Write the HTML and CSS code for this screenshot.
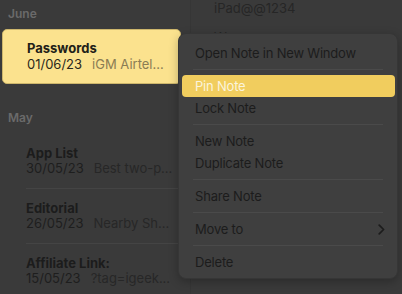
FILE: index.html
```html
<!DOCTYPE html>
<html>
<head>
<meta charset="utf-8">
<link rel="stylesheet" href="styles.css">
</head>
<body>
<div class="app">
  <aside class="sidebar">
    <div class="section-title">June</div>
    <div class="note-selected">
      <div class="note-title">Passwords</div>
      <div class="note-meta"><span class="note-date">01/06/23</span><span class="note-snippet">iGM Airtel...</span></div>
    </div>
    <div class="section-title section-may">May</div>
    <div class="note note-first">
      <div class="note-title">App List</div>
      <div class="note-meta"><span class="note-date">30/05/23</span><span class="note-snippet">Best two-p...</span></div>
    </div>
    <div class="note">
      <div class="note-title">Editorial</div>
      <div class="note-meta"><span class="note-date">26/05/23</span><span class="note-snippet">Nearby Sh...</span></div>
    </div>
    <div class="note note-last">
      <div class="note-title">Affiliate Link:</div>
      <div class="note-meta"><span class="note-date">15/05/23</span><span class="note-snippet">?tag=igeek...</span></div>
    </div>
  </aside>
  <main class="detail">
    <div class="detail-line">iPad@@1234</div>
    <div class="detail-line">Wooooo</div>
  </main>
</div>
<div class="menu">
  <div class="menu-item">Open Note in New Window</div>
  <div class="menu-sep"></div>
  <div class="menu-item menu-item-active">Pin Note</div>
  <div class="menu-item">Lock Note</div>
  <div class="menu-sep"></div>
  <div class="menu-item">New Note</div>
  <div class="menu-item">Duplicate Note</div>
  <div class="menu-sep"></div>
  <div class="menu-item">Share Note</div>
  <div class="menu-sep"></div>
  <div class="menu-item menu-item-sub">Move to
    <svg class="chevron" width="7" height="11" viewBox="0 0 7 11"><path d="M1.2 1.2 L5.6 5.5 L1.2 9.8" fill="none" stroke="#1c1c1c" stroke-width="1.7" stroke-linecap="round" stroke-linejoin="round"/></svg>
  </div>
  <div class="menu-sep"></div>
  <div class="menu-item">Delete</div>
</div>
</body>
</html>
```
FILE: styles.css
```css
html, body {
  margin: 0;
  padding: 0;
}
body {
  width: 402px;
  height: 294px;
  overflow: hidden;
  background: #3a3a3a;
  font-family: Inter, "Noto Sans", sans-serif;
  position: relative;
}
.app {
  display: grid;
  grid-template-columns: 191px 1fr;
  height: 294px;
}
.sidebar {
  padding: 6px 0 0 0;
  border-right: 1px solid #363636;
}
.section-title {
  font-size: 12px;
  font-weight: 600;
  color: #6a6a6a;
  padding-left: 8px;
  height: 16px;
  line-height: 16px;
}
.section-may {
  margin-top: 26px;
}
.note {
  margin-left: 26px;
  padding: 11px 0 12px 0;
  border-bottom: 1px solid #444444;
}
.note-first {
  padding-top: 19px;
}
.note-last {
  border-bottom: none;
}
.note-title {
  font-size: 13px;
  font-weight: 700;
  color: #1c1c1c;
  line-height: 16px;
}
.note-meta {
  font-size: 13px;
  line-height: 15px;
  color: #1e1e1e;
  display: flex;
  gap: 10px;
}
.note-snippet {
  color: #272727;
}
.note-selected {
  margin: 7px 0 0 2px;
  padding: 10px 0 0 24px;
  height: 43px;
  width: 153px;
  background: #fbe28e;
  border: 1px solid #cdb66c;
  border-radius: 5px;
  box-sizing: content-box;
}
.note-selected .note-meta {
  margin-top: 1px;
}
.note-selected .note-title {
  color: #222018;
}
.note-selected .note-date {
  color: #2a271c;
}
.note-selected .note-snippet {
  color: #8a7c54;
}
.detail {
  padding: 0 0 0 23px;
}
.detail-line {
  font-size: 13px;
  line-height: 16px;
  color: #262626;
  height: 29px;
}
.menu {
  position: absolute;
  left: 178px;
  top: 33px;
  width: 220px;
  box-sizing: border-box;
  padding: 8px 0 5px 0;
  background: #3f3f3f;
  border: 1px solid #363636;
  border-radius: 8px;
  box-shadow: 0 3px 10px rgba(0,0,0,0.25);
}
.menu-item {
  height: 22px;
  line-height: 22px;
  font-size: 13px;
  letter-spacing: -0.2px;
  color: #1c1c1c;
  padding-left: 13px;
  margin: 0 2px 0 3px;
  border-radius: 4px;
  display: flex;
  align-items: center;
}
.menu-item-active {
  background: #f1cd5e;
  color: #fbf4dc;
}
.menu-item-sub {
  justify-content: space-between;
  padding-right: 10px;
}
.chevron {
  display: block;
}
.menu-sep {
  height: 1px;
  background: #4a4a4a;
  margin: 5px 14px 5px 14px;
}
```
